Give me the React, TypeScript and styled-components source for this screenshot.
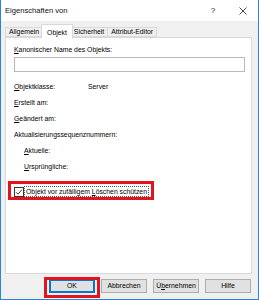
import styled, { createGlobalStyle } from 'styled-components'

const GlobalStyle = createGlobalStyle`
  html, body {
    margin: 0;
    padding: 0;
    background: #ffffff;
  }
  body {
    font-family: 'Liberation Sans', Arial, sans-serif;
  }
`

const Window = styled.div`
  width: 259px;
  height: 300px;
  box-sizing: border-box;
  display: flex;
  flex-direction: column;
  background: #f0f0f0;
  border: 1px solid #2b84d8;
  border-top: none;
  color: #000;
  font-size: 6.85px;
  line-height: 10px;
`

const TitleBar = styled.div`
  height: 21px;
  flex: none;
  display: flex;
  align-items: center;
  background: #ffffff;
  padding-left: 4px;
`

const Title = styled.span`
  flex: 1;
  font-size: 7.6px;
  color: #111;
`

const TitleButton = styled.div`
  width: 30px;
  height: 21px;
  display: flex;
  align-items: center;
  justify-content: center;
  font-size: 8px;
  color: #222;
`

const Body = styled.div`
  flex: 1;
  display: flex;
  flex-direction: column;
  padding: 3px 6px 0 4px;
  min-height: 0;
`

const TabStrip = styled.div`
  display: flex;
  align-items: flex-end;
  height: 13px;
  position: relative;
  z-index: 1;
`

const Tab = styled.div<{ $active?: boolean }>`
  box-sizing: border-box;
  height: ${(p) => (p.$active ? '14px' : '10px')};
  margin-bottom: ${(p) => (p.$active ? '-1px' : '0')};
  margin-left: ${(p) => (p.$active ? '-2px' : '0')};
  margin-right: ${(p) => (p.$active ? '-2px' : '0')};
  padding: ${(p) => (p.$active ? '2px 5px 0' : '0 3px')};
  display: flex;
  align-items: center;
  background: ${(p) => (p.$active ? '#ffffff' : '#f0f0f0')};
  border: 1px solid #d9d9d9;
  border-bottom: ${(p) => (p.$active ? 'none' : '1px solid #d9d9d9')};
  border-left: ${(p) => (p.$active ? '1px solid #d9d9d9' : 'none')};
  white-space: nowrap;
  position: relative;
  z-index: ${(p) => (p.$active ? 2 : 1)};

  &:first-child {
    border-left: 1px solid #d9d9d9;
  }
`

const Panel = styled.div`
  flex: 1;
  background: #ffffff;
  border: 1px solid #d9d9d9;
  padding: 7px 6px 0 8px;
  display: flex;
  flex-direction: column;
`

const Label = styled.div`
  height: 10px;
  white-space: nowrap;
`

const TextBox = styled.div`
  margin-top: 2px;
  height: 15px;
  box-sizing: border-box;
  border: 1px solid #b9b9b9;
  background: #ffffff;
`

const InfoGrid = styled.div`
  margin-top: 10px;
  display: grid;
  grid-template-columns: 74px 1fr;
  row-gap: 6px;
`

const InfoLabel = styled.div<{ $indent?: boolean; $wide?: boolean }>`
  height: 10px;
  white-space: nowrap;
  padding-left: ${(p) => (p.$indent ? '10px' : '0')};
  grid-column: ${(p) => (p.$wide ? '1 / 3' : 'auto')};
`

const InfoValue = styled.div`
  height: 10px;
`

const CheckRow = styled.div`
  margin-top: 14px;
  align-self: flex-start;
  display: flex;
  align-items: center;
  height: 11px;
  position: relative;

  &::after {
    content: '';
    position: absolute;
    left: -6px;
    right: -5px;
    top: -5px;
    bottom: -3px;
    border: 3px solid #e3141b;
    pointer-events: none;
  }
`

const CheckBox = styled.span`
  width: 10px;
  height: 10px;
  box-sizing: border-box;
  border: 1px solid #333;
  background: #fff;
  display: flex;
  align-items: center;
  justify-content: center;
`

const FocusText = styled.span`
  border: 1px dotted #555;
  padding: 0 1px;
  line-height: 9px;
  white-space: nowrap;
`

const Footer = styled.div`
  height: 25px;
  flex: none;
  display: flex;
  justify-content: flex-end;
  align-items: flex-start;
  gap: 6px;
  padding: 5px 7px 0 0;
  box-sizing: border-box;
`

const DialogButton = styled.div<{ $default?: boolean; $marked?: boolean }>`
  width: 46px;
  height: 14px;
  box-sizing: border-box;
  display: flex;
  align-items: center;
  justify-content: center;
  background: #e1e1e1;
  border: 1px solid ${(p) => (p.$default ? '#0078d7' : '#adadad')};
  box-shadow: ${(p) => (p.$default ? 'inset 0 0 0 1px #0078d7' : 'none')};
  white-space: nowrap;
  position: relative;

  &::after {
    content: '';
    display: ${(p) => (p.$marked ? 'block' : 'none')};
    position: absolute;
    left: -6px;
    right: -6px;
    top: -3px;
    bottom: -6px;
    border: 3px solid #e3141b;
    pointer-events: none;
  }
`

const Key = styled.u`
  text-decoration-thickness: 0.5px;
  text-underline-offset: 1px;
`

const CloseIcon = () => (
  <svg width="8" height="8" viewBox="0 0 8 8">
    <path d="M0.5 0.5 L7.5 7.5 M7.5 0.5 L0.5 7.5" stroke="#222" strokeWidth="0.8" fill="none" />
  </svg>
)

const CheckMark = () => (
  <svg width="8" height="8" viewBox="0 0 8 8">
    <path d="M1 4.2 L3 6.2 L7 1.6" stroke="#222" strokeWidth="0.9" fill="none" />
  </svg>
)

const App = () => {
  return (
    <>
      <GlobalStyle />
      <Window>
        <TitleBar>
          <Title>Eigenschaften von</Title>
          <TitleButton>?</TitleButton>
          <TitleButton>
            <CloseIcon />
          </TitleButton>
        </TitleBar>
        <Body>
          <TabStrip>
            <Tab>Allgemein</Tab>
            <Tab $active>Objekt</Tab>
            <Tab>Sicherheit</Tab>
            <Tab>Attribut-Editor</Tab>
          </TabStrip>
          <Panel>
            <Label>
              <Key>K</Key>anonischer Name des Objekts:
            </Label>
            <TextBox />
            <InfoGrid>
              <InfoLabel>
                <Key>O</Key>bjektklasse:
              </InfoLabel>
              <InfoValue>Server</InfoValue>
              <InfoLabel>
                <Key>E</Key>rstellt am:
              </InfoLabel>
              <InfoValue />
              <InfoLabel>
                <Key>G</Key>eändert am:
              </InfoLabel>
              <InfoValue />
              <InfoLabel $wide>Aktualisierungssequenznummern:</InfoLabel>
              <InfoLabel $indent>
                <Key>A</Key>ktuelle:
              </InfoLabel>
              <InfoValue />
              <InfoLabel $indent>
                <Key>U</Key>rsprüngliche:
              </InfoLabel>
              <InfoValue />
            </InfoGrid>
            <CheckRow>
              <CheckBox>
                <CheckMark />
              </CheckBox>
              <FocusText>
                Objekt vor zufälligem <Key>L</Key>öschen schützen
              </FocusText>
            </CheckRow>
          </Panel>
        </Body>
        <Footer>
          <DialogButton $default $marked>
            OK
          </DialogButton>
          <DialogButton>Abbrechen</DialogButton>
          <DialogButton>
            Ü<Key>b</Key>ernehmen
          </DialogButton>
          <DialogButton>Hilfe</DialogButton>
        </Footer>
      </Window>
    </>
  )
}

export default App
